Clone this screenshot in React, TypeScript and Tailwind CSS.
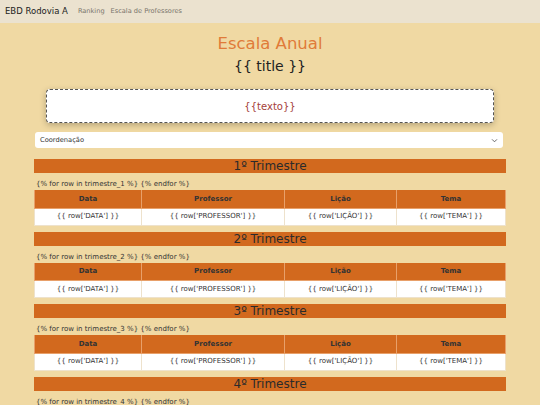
import React from 'react';

const font = { fontFamily: '"DejaVu Sans", Verdana, sans-serif' };

function Trimestre({ n }: { n: number }) {
  return (
    <section className="mt-[6px] first:mt-0">
      <h2 className="bg-[#d2691e] text-[#2b2b2b] text-[12px] leading-[14px] text-center">
        {n}º Trimestre
      </h2>
      <p className="text-[7px] leading-[9px] text-[#333] mt-[7px] ml-[2px]">
        {`{% for row in trimestre_${n} %} {% endfor %}`}
      </p>
      <table className="w-full border-collapse table-fixed mt-[1px] text-[7px]">
        <colgroup>
          <col className="w-[107px]" />
          <col className="w-[143px]" />
          <col className="w-[112px]" />
          <col />
        </colgroup>
        <thead>
          <tr className="bg-[#d2691e] h-[18px]">
            {['Data', 'Professor', 'Lição', 'Tema'].map(h => (
              <th key={h} className="font-bold text-[#333] border border-[#e8a06a] border-t-0">
                {h}
              </th>
            ))}
          </tr>
        </thead>
        <tbody>
          <tr className="bg-white h-[17px]">
            {["DATA", "PROFESSOR", "LIÇÃO", "TEMA"].map(c => (
              <td key={c} className="text-center text-[#333] border border-[#eee2cc]">
                {`{{ row['${c}'] }}`}
              </td>
            ))}
          </tr>
        </tbody>
      </table>
    </section>
  );
}

export default function App() {
  return (
    <div className="min-h-[405px] bg-[#f0d9a3]" style={font}>
      <nav className="h-[23px] bg-[#ebe2cf] flex items-center px-[5px]">
        <span className="text-[8.5px] text-[#222] mr-[10px]">EBD Rodovia A</span>
        <a className="text-[6.6px] text-[#7a756c] mr-[6px]">Ranking</a>
        <a className="text-[6.6px] text-[#7a756c]">Escala de Professores</a>
      </nav>

      <div className="px-[34px] pt-[10px]">
        <h1 className="text-center text-[#e07b39] text-[16.5px] leading-[22px]">Escala Anual</h1>
        <p className="text-center text-[#222] text-[14px] leading-[18px] mt-[2px]">{'{{ title }}'}</p>

        <div className="mx-[12px] mt-[14px] h-[34px] bg-white border border-dashed border-[#555] rounded-[4px] shadow-[0_2px_6px_rgba(0,0,0,0.25)] flex items-center justify-center">
          <span className="text-[10px] text-[#a5413a]">{'{{texto}}'}</span>
        </div>

        <div className="mt-[9px] ml-[1px] mr-[3px] h-[16px] bg-white rounded-[3px] flex items-center justify-between px-[5px]">
          <span className="text-[6.7px] text-[#333]">Coordenação</span>
          <svg width="7" height="7" viewBox="0 0 16 16" fill="none" stroke="#555" strokeWidth="2" strokeLinecap="round" strokeLinejoin="round">
            <path d="M3 6l5 5 5-5" />
          </svg>
        </div>

        <div className="mt-[11px]">
          {[1, 2, 3, 4].map(n => (
            <Trimestre key={n} n={n} />
          ))}
        </div>
      </div>
    </div>
  );
}
